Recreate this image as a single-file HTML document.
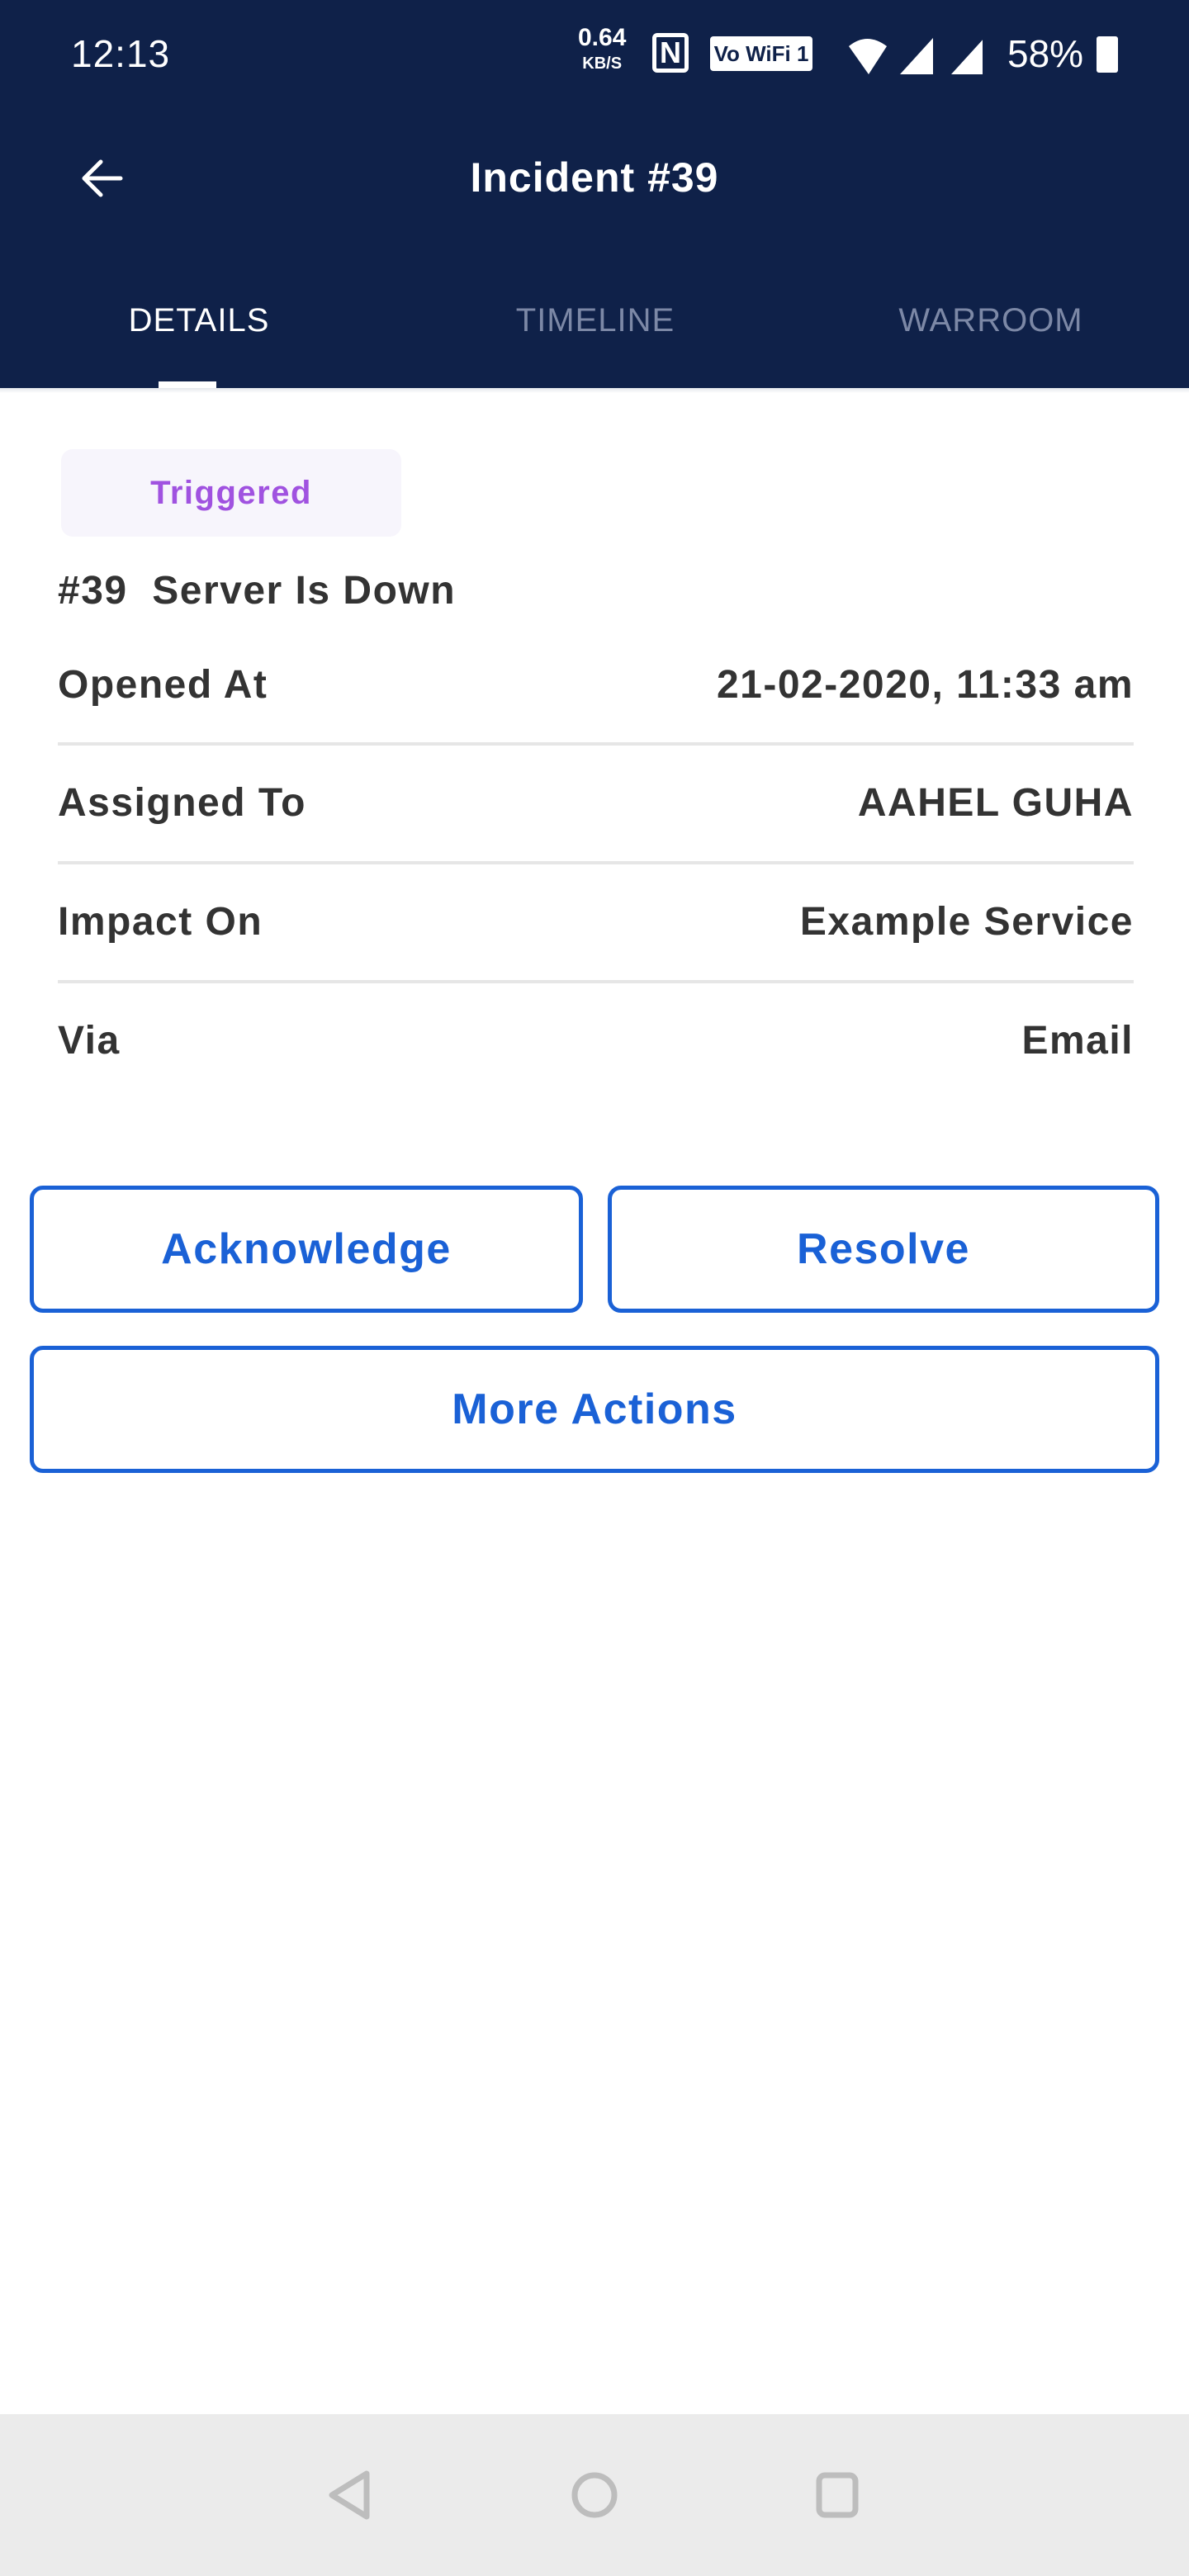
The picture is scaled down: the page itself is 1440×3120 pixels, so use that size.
<!DOCTYPE html>
<html><head><meta charset="utf-8"><style>
*{margin:0;padding:0;box-sizing:border-box}
body{width:1440px;height:3120px;background:#fff;font-family:"Liberation Sans",sans-serif;position:relative;overflow:hidden;color:#2e2e2e}
.hdr{position:absolute;left:0;top:0;width:1440px;height:470px;background:#0f2149}
.abs{position:absolute}
.tab{position:absolute;top:366px;font-size:40px;transform:translateX(-50%);letter-spacing:1px}
.row{position:absolute;left:70px;width:1303px;font-size:48px;font-weight:bold;color:#333;display:flex;justify-content:space-between;line-height:56px;letter-spacing:1.5px}
.div{position:absolute;left:70px;width:1303px;height:4px;background:#e6e6e6}
.btn{position:absolute;border:5px solid #1a61d6;border-radius:16px;color:#1a61d6;font-size:52px;font-weight:bold;display:flex;align-items:center;justify-content:center;letter-spacing:1.5px}
</style></head><body>
<div class="hdr"></div>
<div class="abs" style="left:86px;top:38px;font-size:46px;color:#fff;letter-spacing:1px">12:13</div>
<div class="abs" style="left:700px;top:32px;color:#fff;font-weight:bold;font-size:30px;line-height:28px;text-align:center">0.64<br><span style="font-size:20px">KB/S</span></div>
<div class="abs" style="left:790px;top:40px;width:44px;height:48px;border:5px solid #fff;border-radius:6px;color:#fff;font-weight:bold;font-size:36px;line-height:38px;text-align:center">N</div>
<div class="abs" style="left:860px;top:44px;width:124px;height:42px;background:#fff;border-radius:4px;color:#0f2149;font-weight:bold;font-size:26px;line-height:42px;text-align:center">Vo WiFi 1</div>
<svg class="abs" style="left:1010px;top:38px" width="180" height="60"><path d="M18 18 Q40 0 64 18 L42 52 Z" fill="#fff"/><path d="M80 52 L120 8 L120 52 Z" fill="#fff"/><path d="M142 52 L182 8 L182 52 Z" fill="#fff"/></svg>
<div class="abs" style="left:1220px;top:38px;font-size:46px;color:#fff">58%</div>
<div class="abs" style="left:1328px;top:44px;width:26px;height:44px;background:#fff;border-radius:3px"></div>
<svg class="abs" style="left:96px;top:190px" width="56" height="52"><path d="M50 26 H8 M26 6 L6 26 L26 46" stroke="#fff" stroke-width="5" fill="none" stroke-linecap="round" stroke-linejoin="round"/></svg>
<div class="abs" style="left:0;width:1440px;top:186px;text-align:center;color:#fff;font-size:50px;font-weight:bold;letter-spacing:1px">Incident #39</div>
<div class="tab" style="left:241px;color:#fff">DETAILS</div>
<div class="tab" style="left:721px;color:#7c88a6">TIMELINE</div>
<div class="tab" style="left:1200px;color:#7c88a6">WARROOM</div>
<div class="abs" style="left:192px;top:462px;width:70px;height:8px;background:#fff"></div>
<div class="abs" style="left:0;top:470px;width:1440px;height:6px;background:linear-gradient(#e4e7ec,#fff)"></div>
<div class="abs" style="left:74px;top:544px;width:412px;height:106px;background:#f7f5fc;border-radius:14px;color:#a052e0;font-size:40px;font-weight:bold;display:flex;align-items:center;justify-content:center;letter-spacing:1.5px">Triggered</div>
<div class="abs" style="left:70px;top:688px;font-size:48px;font-weight:bold;color:#333;white-space:pre;letter-spacing:1.5px">#39  Server Is Down</div>
<div class="row" style="top:802px"><span>Opened At</span><span>21-02-2020, 11:33 am</span></div>
<div class="div" style="top:899px"></div>
<div class="row" style="top:945px"><span>Assigned To</span><span>AAHEL GUHA</span></div>
<div class="div" style="top:1043px"></div>
<div class="row" style="top:1089px"><span>Impact On</span><span>Example Service</span></div>
<div class="div" style="top:1187px"></div>
<div class="row" style="top:1233px"><span>Via</span><span>Email</span></div>
<div class="btn" style="left:36px;top:1436px;width:670px;height:154px">Acknowledge</div>
<div class="btn" style="left:736px;top:1436px;width:668px;height:154px">Resolve</div>
<div class="btn" style="left:36px;top:1630px;width:1368px;height:154px">More Actions</div>
<div class="abs" style="left:0;top:2924px;width:1440px;height:196px;background:#ebebeb"></div>
<svg class="abs" style="left:390px;top:2990px" width="700" height="64"><path d="M54 6 L54 58 L12 32 Z" stroke="#bdbdbd" stroke-width="7" fill="none" stroke-linejoin="round"/><circle cx="330" cy="32" r="24" stroke="#bdbdbd" stroke-width="7" fill="none"/><rect x="602" y="8" width="44" height="48" rx="7" stroke="#bdbdbd" stroke-width="7" fill="none"/></svg>
</body></html>
